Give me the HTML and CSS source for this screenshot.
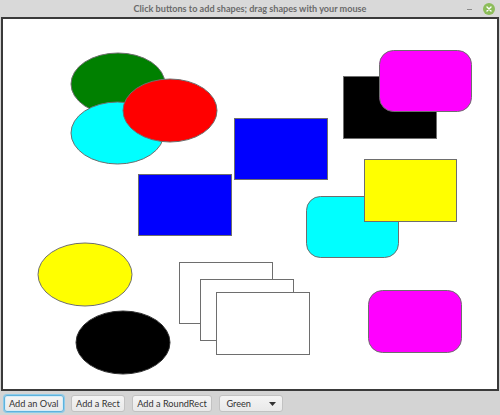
FILE: index.html
```html
<!DOCTYPE html>
<html>
<head>
<meta charset="utf-8">
<link rel="stylesheet" href="styles.css">
</head>
<body>
<div class="window">
  <div class="titlebar">
    <span class="spacer"></span>
    <span class="title">Click buttons to add shapes; drag shapes with your mouse</span>
    <span class="controls">
      <span class="minimize"></span>
      <span class="close">
        <svg width="12" height="12" viewBox="0 0 12 12"><circle cx="6" cy="6" r="6" fill="#8cbd5a"/><path d="M4 4 L8 8 M8 4 L4 8" stroke="#ffffff" stroke-width="1.4" stroke-linecap="round"/></svg>
      </span>
    </span>
  </div>
  <div class="canvas">
    <svg class="board" width="494" height="370" viewBox="3 19 494 370">
      <g stroke="#6e6e6e" stroke-width="1">
        <ellipse cx="118" cy="84" rx="47" ry="31" fill="#008000"/>
        <ellipse cx="117.5" cy="133" rx="46.5" ry="31" fill="#00ffff"/>
        <ellipse cx="170" cy="110.5" rx="47" ry="31.5" fill="#ff0000"/>
        <rect x="234.5" y="118.5" width="93" height="61" fill="#0000ff"/>
        <rect x="138.5" y="174.5" width="93" height="61" fill="#0000ff"/>
        <rect x="343.5" y="76.5" width="93" height="62" fill="#000000"/>
        <rect x="379.5" y="50.5" width="92" height="61" rx="14" ry="14" fill="#ff00ff"/>
        <rect x="306.5" y="196.5" width="92" height="61" rx="14" ry="14" fill="#00ffff"/>
        <rect x="364.5" y="159.5" width="92" height="62" fill="#ffff00"/>
        <rect x="179.5" y="262.5" width="93" height="61" fill="#ffffff"/>
        <rect x="200.5" y="279.5" width="93" height="61" fill="#ffffff"/>
        <rect x="216.5" y="292.5" width="93" height="62" fill="#ffffff"/>
        <ellipse cx="85" cy="274.5" rx="47" ry="31.5" fill="#ffff00"/>
        <ellipse cx="123" cy="342.5" rx="47" ry="31.5" fill="#000000" stroke="#333333"/>
        <rect x="368.5" y="290.5" width="93" height="62" rx="14" ry="14" fill="#ff00ff"/>
      </g>
    </svg>
  </div>
  <div class="toolbar">
    <button class="btn focused">Add an Oval</button>
    <button class="btn">Add a Rect</button>
    <button class="btn">Add a RoundRect</button>
    <div class="combo">
      <span>Green</span>
      <svg width="7" height="4" viewBox="0 0 7 4"><path d="M0 0 H7 L3.5 4 Z" fill="#333333"/></svg>
    </div>
  </div>
</div>
</body>
</html>
```

FILE: styles.css
```css
* { box-sizing: border-box; }
html, body {
  margin: 0;
  padding: 0;
  background: #d4d4d4;
}
body {
  width: 500px;
  height: 415px;
  overflow: hidden;
  font-family: "Lato", "Liberation Sans", Arial, sans-serif;
}
.window {
  display: flex;
  flex-direction: column;
  width: 500px;
  height: 415px;
}
.titlebar {
  height: 17px;
  background: #d9d9d9;
  display: grid;
  grid-template-columns: 1fr auto 1fr;
  align-items: center;
}
.title {
  font-family: "Lato", "Noto Sans", sans-serif;
  font-weight: bold;
  font-size: 9.1px;
  color: #6a6a6a;
  white-space: nowrap;
}
.controls {
  display: flex;
  justify-content: flex-end;
  align-items: center;
  gap: 11px;
  padding-right: 5px;
}
.minimize {
  width: 5px;
  height: 1px;
  background: #8a8a8a;
  margin-top: 1px;
}
.close {
  display: flex;
}
.canvas {
  margin-left: 1px;
  width: 498px;
  height: 374px;
  border: 2px solid #3a3a3a;
  background: #ffffff;
}
.board {
  display: block;
}
.toolbar {
  flex: 1;
  display: flex;
  align-items: center;
  gap: 7.5px;
  padding-left: 4px;
  padding-top: 1px;
}
.btn {
  height: 17px;
  padding: 0 4px;
  border: 1px solid #c2c2c2;
  border-radius: 3px;
  background: linear-gradient(#f4f4f4, #e9e9e9);
  font-family: "Lato", "Liberation Sans", Arial, sans-serif;
  font-size: 9.2px;
  color: #333333;
  line-height: 15px;
}
.btn.focused {
  box-shadow: 0 0 0 1px #8ccbea, inset 0 0 0 1px #d6edf8;
  border-color: #5eb2dc;
}
.combo {
  height: 17px;
  width: 64px;
  display: flex;
  align-items: center;
  justify-content: space-between;
  padding: 0 6px 0 6px;
  border: 1px solid #c2c2c2;
  border-radius: 3px;
  background: linear-gradient(#f4f4f4, #e9e9e9);
  font-size: 9.2px;
  color: #333333;
}
```
